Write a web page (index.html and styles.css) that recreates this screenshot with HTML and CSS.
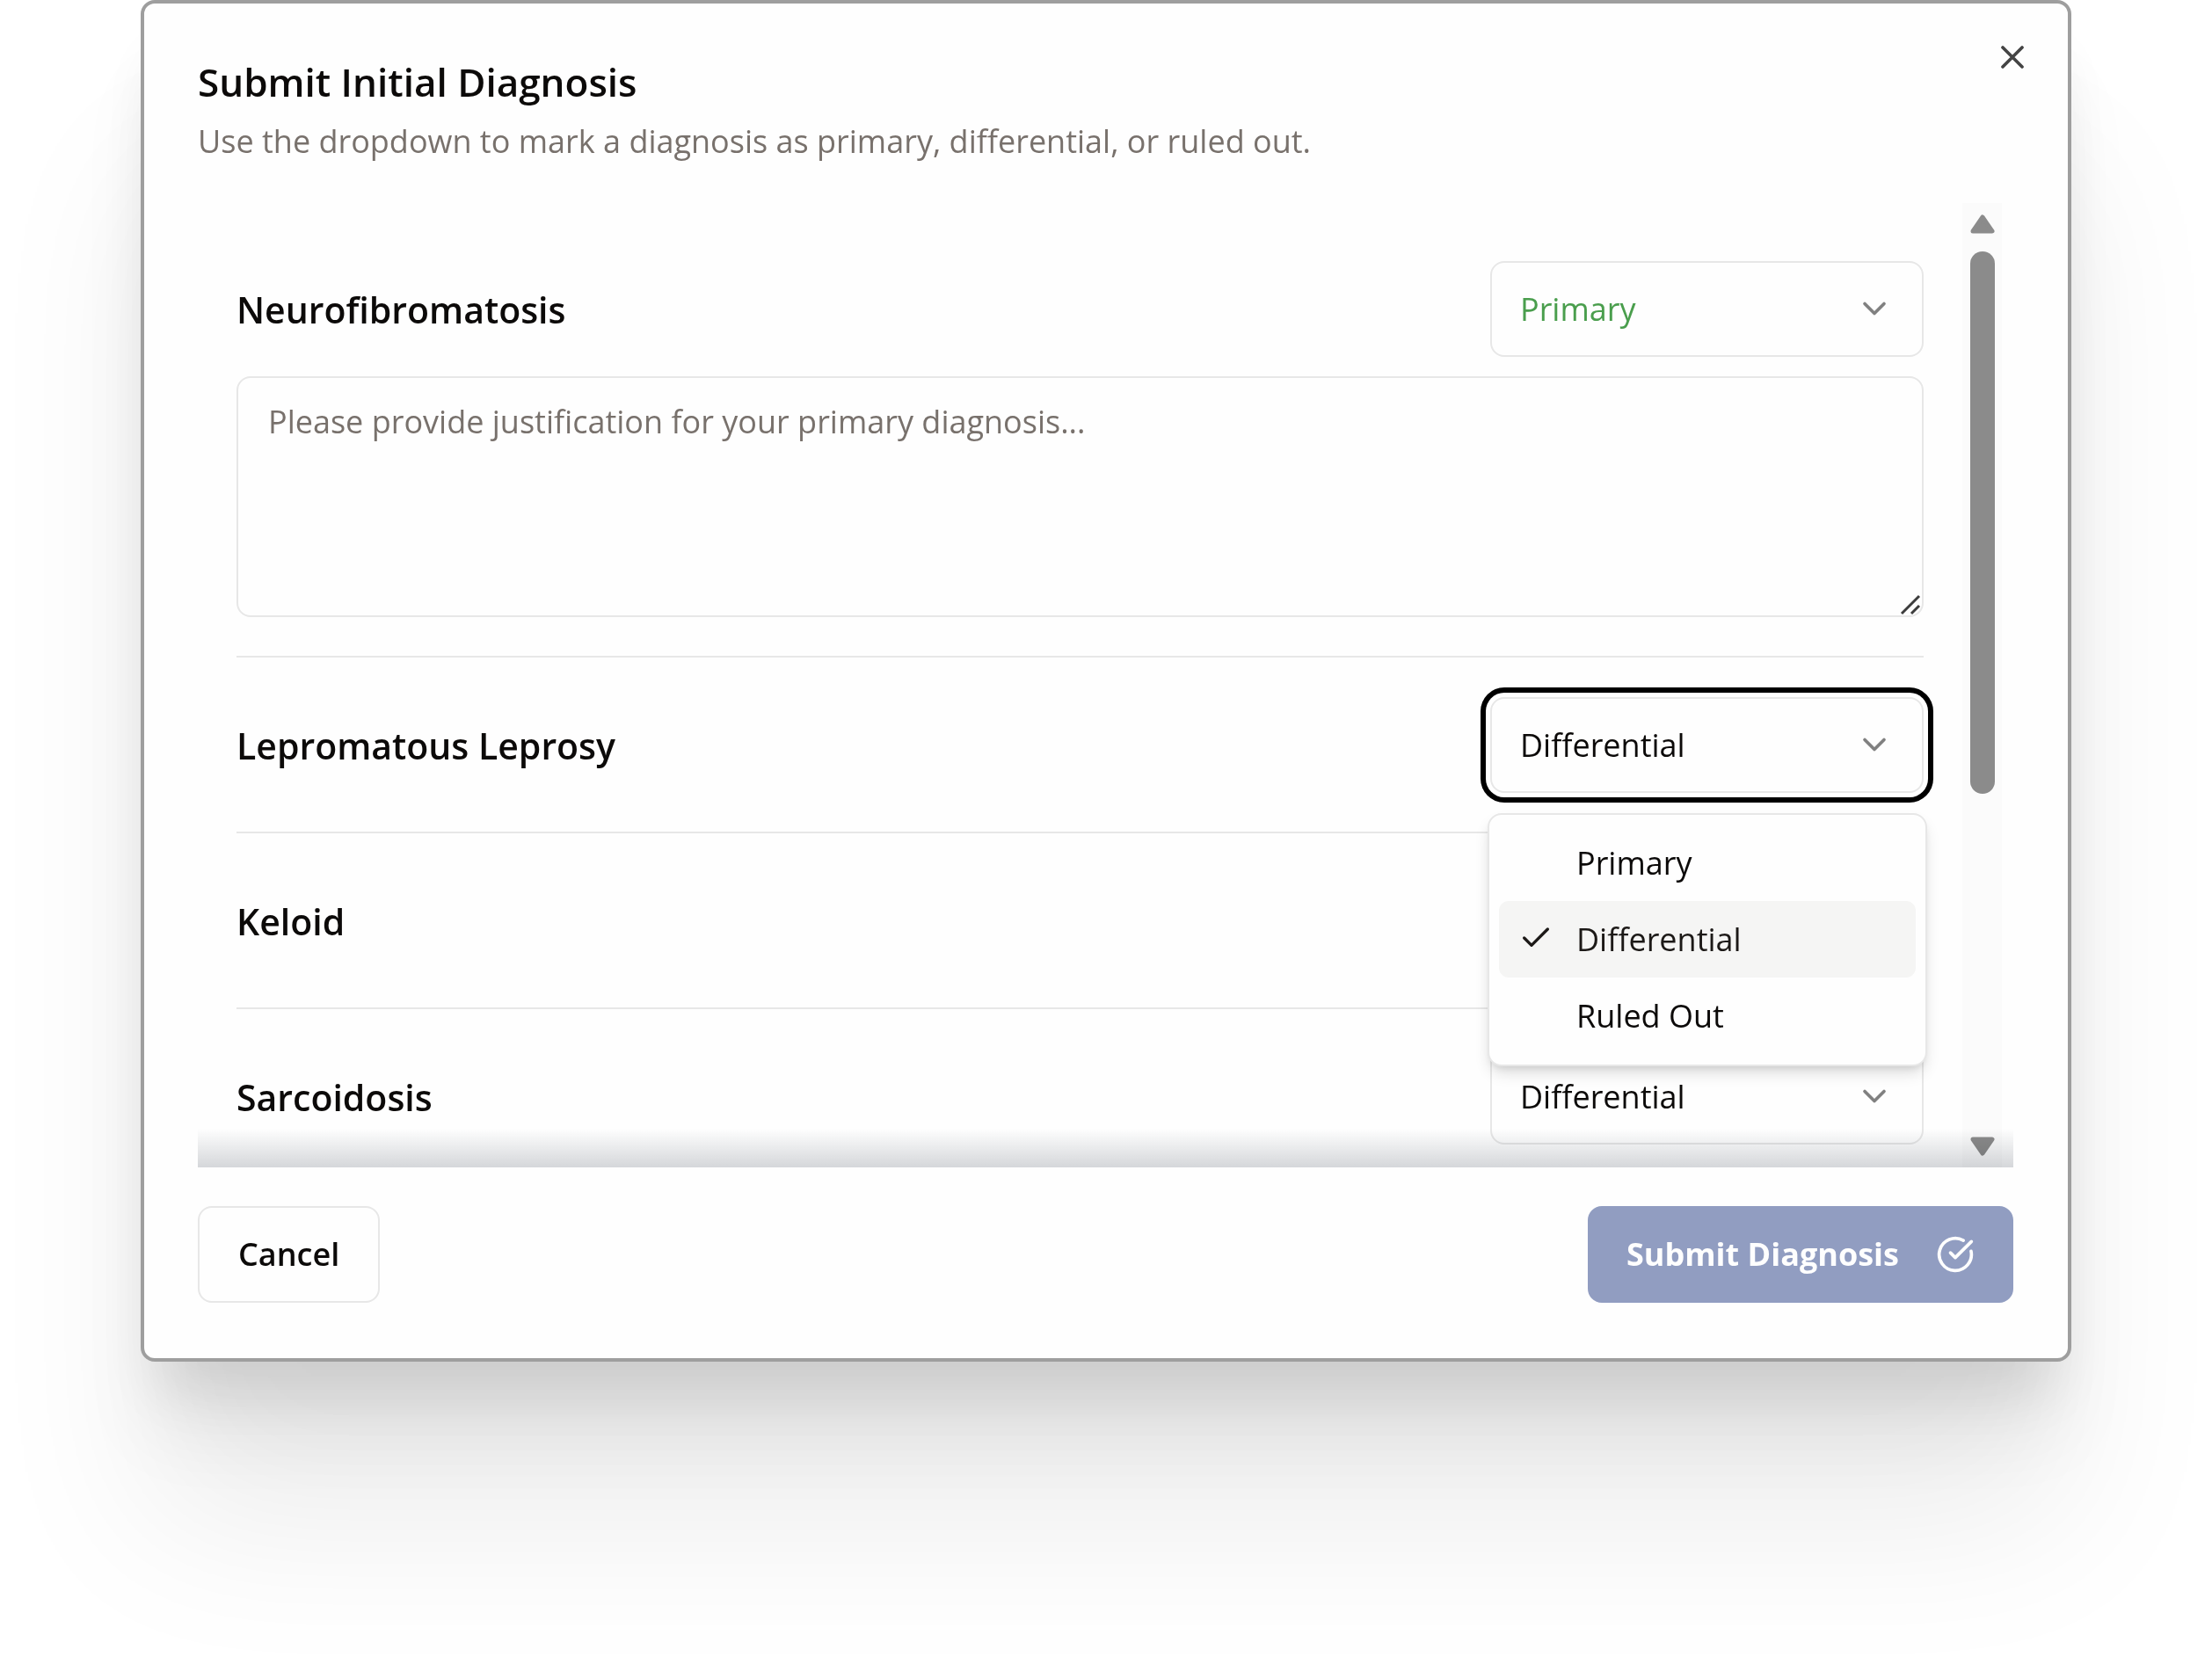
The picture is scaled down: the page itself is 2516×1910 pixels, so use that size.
FILE: index.html
```html
<!DOCTYPE html>
<html lang="en">
<head>
<meta charset="utf-8">
<title>Submit Initial Diagnosis</title>
<meta name="viewport" content="width=device-width, initial-scale=1">
<link rel="stylesheet" href="styles.css">
</head>
<body>
<main class="dialog" role="dialog" aria-labelledby="dialog-title" aria-describedby="dialog-hint">
  <button class="close" type="button" aria-label="Close">
    <svg class="icon" viewBox="0 0 24 24"><path d="M18 6 6 18M6 6l12 12"/></svg>
  </button>
  <header class="header">
    <h1 class="title" id="dialog-title">Submit Initial Diagnosis</h1>
    <p class="hint" id="dialog-hint">Use the dropdown to mark a diagnosis as primary, differential, or ruled out.</p>
  </header>

  <div class="scroll">
    <div class="list">
      <section class="item">
        <div class="row">
          <label class="name" for="d1">Neurofibromatosis</label>
          <div class="picker">
            <select class="select select-primary" id="d1"><option>Primary</option><option>Differential</option><option>Ruled Out</option></select>
            <svg class="icon chevron" viewBox="0 0 24 24"><path d="m6 9 6 6 6-6"/></svg>
          </div>
        </div>
        <div class="note">
          <textarea class="textarea" aria-label="Justification" placeholder="Please provide justification for your primary diagnosis..."></textarea>
          <svg class="grip" viewBox="0 0 24 24"><path d="M2 22 22 2M13 22l9-9"/></svg>
        </div>
      </section>
      <section class="item">
        <div class="row">
          <label class="name" for="d2">Lepromatous Leprosy</label>
          <div class="picker">
            <select class="select select-open" id="d2"><option>Primary</option><option selected>Differential</option><option>Ruled Out</option></select>
            <svg class="icon chevron" viewBox="0 0 24 24"><path d="m6 9 6 6 6-6"/></svg>
            <ul class="menu" role="listbox" aria-label="Lepromatous Leprosy">
              <li class="option" role="option" aria-selected="false">Primary</li>
              <li class="option option-active" role="option" aria-selected="true"><svg class="icon check" viewBox="0 0 24 24"><path d="M20 6 9 17l-5-5"/></svg>Differential</li>
              <li class="option" role="option" aria-selected="false">Ruled Out</li>
            </ul>
          </div>
        </div>
      </section>
      <section class="item">
        <div class="row">
          <label class="name" for="d3">Keloid</label>
          <div class="picker">
            <select class="select" id="d3"><option>Primary</option><option selected>Differential</option><option>Ruled Out</option></select>
            <svg class="icon chevron" viewBox="0 0 24 24"><path d="m6 9 6 6 6-6"/></svg>
          </div>
        </div>
      </section>
      <section class="item">
        <div class="row">
          <label class="name" for="d4">Sarcoidosis</label>
          <div class="picker">
            <select class="select" id="d4"><option>Primary</option><option selected>Differential</option><option>Ruled Out</option></select>
            <svg class="icon chevron" viewBox="0 0 24 24"><path d="m6 9 6 6 6-6"/></svg>
          </div>
        </div>
      </section>
    </div>
    <div class="scrollbar" aria-hidden="true">
      <svg class="arrow" viewBox="0 0 28 22"><path d="M14 3 25 19H3Z"/></svg>
      <div class="thumb"></div>
      <svg class="arrow arrow-down" viewBox="0 0 28 22"><path d="M14 19 25 3H3Z"/></svg>
    </div>
  </div>

  <footer class="footer">
    <button class="button" type="button">Cancel</button>
    <button class="button button-submit" type="button">Submit Diagnosis
      <svg class="icon" viewBox="0 0 24 24"><path d="M21.801 10A10 10 0 1 1 17 3.335"/><path d="m9 11 3 3L22 4"/></svg>
    </button>
  </footer>
</main>
</body>
</html>
```
FILE: styles.css
```css
* {
  box-sizing: border-box;
}

body {
  margin: 0;
  background: #fff;
  color: #0c0a09;
  font-family: "Open Sans", "Noto Sans", sans-serif;
  font-size: 36px;
  line-height: 54px;
  overflow: hidden;
}

.dialog {
  position: relative;
  margin: 0 160px 360px;
  padding: 59px 62px 63px 61px;
  border: 4px solid #9e9e9e;
  border-radius: 16px;
  background: #fefefe;
  box-shadow:
    0 50px 60px -20px rgba(0, 0, 0, 0.09),
    0 90px 90px -10px rgba(0, 0, 0, 0.06),
    0 190px 190px -10px rgba(0, 0, 0, 0.08);
}

.icon {
  display: block;
  flex: none;
  width: 44px;
  height: 44px;
  fill: none;
  stroke: currentColor;
  stroke-width: 2;
  stroke-linecap: round;
  stroke-linejoin: round;
}

.close {
  position: absolute;
  top: 39px;
  right: 41px;
  padding: 0;
  border: 0;
  background: none;
  color: #444;
}

.header {
  display: grid;
  gap: 11px;
  margin-bottom: 43px;
}

.title {
  margin: 0;
  font-size: 44px;
  font-weight: 600;
  line-height: 60px;
}

.hint {
  margin: 0;
  color: #78716c;
}

.scroll {
  position: relative;
  display: flex;
  height: 1097px;
  margin-bottom: 44px;
  padding-right: 13px;
  overflow: hidden;
}

.scroll::after {
  content: "";
  position: absolute;
  inset: auto 0 0;
  height: 44px;
  background: linear-gradient(to top, #d6d8db, rgba(229, 231, 235, 0));
  mix-blend-mode: multiply;
}

.list {
  flex: 1;
  padding: 21px 44px 0;
}

.item {
  display: grid;
  gap: 22px;
  padding: 45px 0 44px;
  border-bottom: 2px solid #e7e7e7;
}

.row {
  display: flex;
  align-items: center;
  justify-content: space-between;
}

.name {
  font-size: 41px;
  font-weight: 600;
}

.picker {
  position: relative;
  width: 493px;
}

.select {
  display: block;
  width: 100%;
  height: 109px;
  padding: 0 80px 0 32px;
  appearance: none;
  border: 2px solid #e7e7e7;
  border-radius: 16px;
  outline: 0;
  background: #fefefe;
  color: inherit;
  font: inherit;
}

.select-primary {
  color: #4a9e4d;
}

.select-open {
  box-shadow: 0 0 0 5px #fff, 0 0 0 11px #000;
}

.chevron {
  position: absolute;
  top: 32px;
  right: 34px;
  color: #808080;
  pointer-events: none;
}

.note {
  position: relative;
  display: grid;
}

.textarea {
  height: 274px;
  padding: 23px 34px;
  border: 2px solid #e7e7e7;
  border-radius: 16px;
  outline: 0;
  background: #fefefe;
  color: inherit;
  font: inherit;
  resize: none;
}

.textarea::placeholder {
  color: #78716c;
  opacity: 1;
}

.grip {
  position: absolute;
  right: 3px;
  bottom: 2px;
  width: 24px;
  height: 24px;
  fill: none;
  stroke: #3c3c3c;
  stroke-width: 3;
}

.menu {
  position: absolute;
  z-index: 2;
  top: 132px;
  left: -3px;
  right: -4px;
  margin: 0;
  padding: 11px 11px 12px;
  border: 2px solid #e7e7e7;
  border-radius: 16px;
  background: #fefefe;
  box-shadow: 0 10px 18px -3px rgba(0, 0, 0, 0.14), 0 5px 10px -5px rgba(0, 0, 0, 0.14);
  list-style: none;
}

.option {
  position: relative;
  padding: 17px 88px 16px;
  border-radius: 11px;
}

.option-active {
  background: #f5f5f4;
  color: #1c1917;
}

.check {
  position: absolute;
  top: 22px;
  left: 22px;
  width: 40px;
  height: 40px;
}

.scrollbar {
  display: flex;
  flex-direction: column;
  align-items: center;
  width: 45px;
  padding: 13px 0;
  background: #fbfbfb;
}

.arrow {
  width: 28px;
  height: 22px;
  fill: #8b8b8b;
  stroke: #8b8b8b;
  stroke-width: 5;
  stroke-linejoin: round;
}

.arrow-down {
  margin-top: auto;
}

.thumb {
  width: 28px;
  height: 617px;
  margin-top: 20px;
  border-radius: 14px;
  background: #8b8b8b;
}

.footer {
  display: flex;
  justify-content: space-between;
}

.button {
  display: flex;
  align-items: center;
  gap: 42px;
  height: 110px;
  padding: 0 44px;
  border: 2px solid #e7e7e7;
  border-radius: 16px;
  background: #fefefe;
  color: inherit;
  font: inherit;
  font-weight: 600;
}

.button-submit {
  padding: 0 42px;
  border-color: #919dc1;
  background: #919dc1;
  color: #fefefe;
  font-weight: 700;
}
```
